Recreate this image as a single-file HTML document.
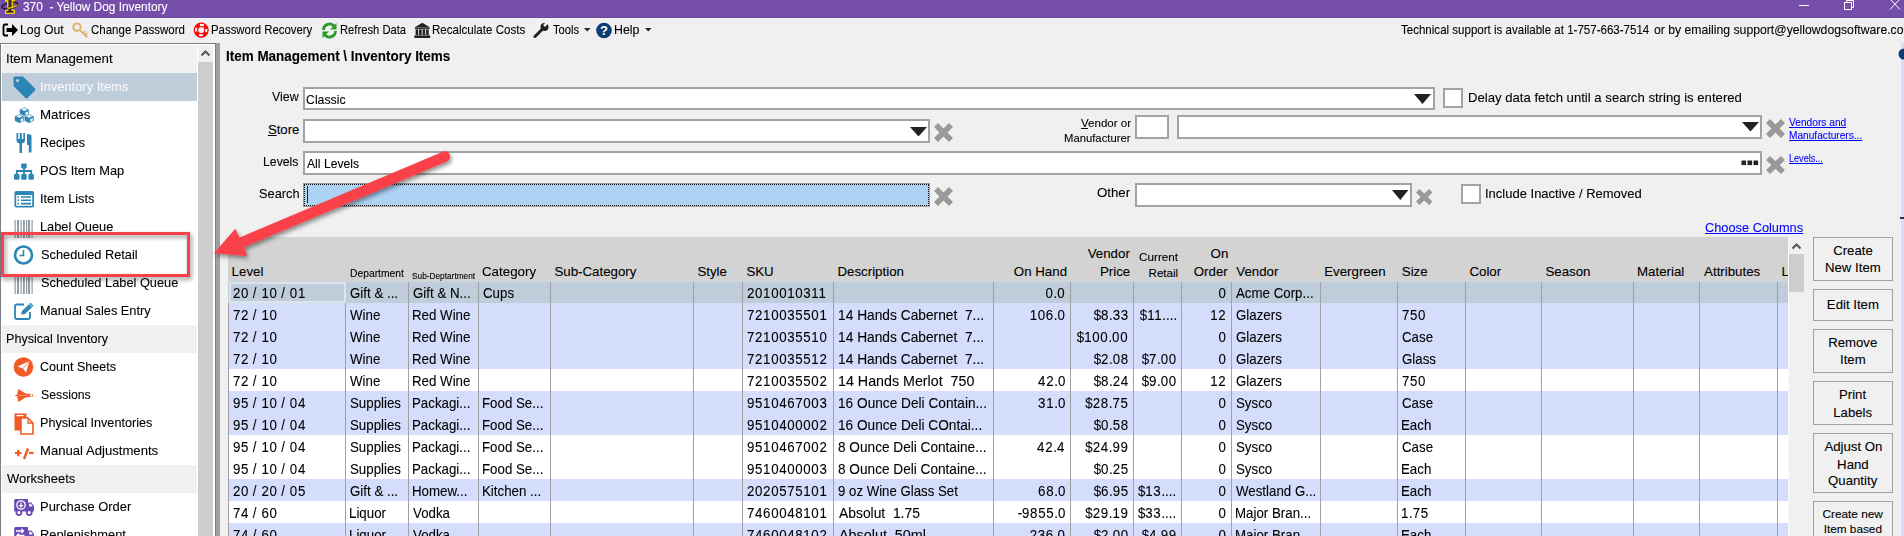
<!DOCTYPE html><html><head><meta charset="utf-8"><title>Yellow Dog Inventory</title><style>
html,body{margin:0;padding:0;}
body{width:1904px;height:536px;overflow:hidden;position:relative;background:#f0f0f0;font-family:"Liberation Sans", sans-serif;color:#000;}
.t{position:absolute;white-space:pre;-webkit-text-stroke:0.1px currentColor;}
.r{position:absolute;}
.d{letter-spacing:0.7px;}
.s{letter-spacing:1.3px;}
.lnk{color:#0000ff;text-decoration:underline;}
</style></head><body>
<div class="r" style="left:0px;top:0px;width:1904px;height:18px;background:#744ea8"></div>
<div class="r" style="left:0px;top:17px;width:1904px;height:1px;background:#6d47a2"></div>
<svg class="r" style="left:0px;top:0px;" width="18" height="17" viewBox="0 0 18 17"><path d="M5 -1 H15 V1.8 H13 V9.8 H15 V14 H5 V9.8 H7 V1.8 H5 Z" fill="#f6cc00"/><path d="M8.4 -1 H11.6 V11 H13.6 V12.8 H6.4 V11 H8.4 Z" fill="#333"/><path d="M12.8 2.3 Q18.5 1.8 17 5 Q15 8 8 8.6 Q1.5 9.3 2.2 6.5 Q3 4.5 7 3.5" fill="none" stroke="#222" stroke-width="1.5"/><path d="M7.5 8.4 Q14 7.8 17 5" fill="none" stroke="#f6cc00" stroke-width="1.1"/></svg>
<div class="t " style="left:22.55px;top:0px;font-size:12px;line-height:14px;transform:scaleX(0.9890);transform-origin:0 0;color:#fff">370  - Yellow Dog Inventory</div>
<div class="r" style="left:1799px;top:5px;width:10px;height:1px;background:#fff"></div>
<svg class="r" style="left:1843px;top:0px;" width="12" height="11" viewBox="0 0 12 11"><rect x="1.5" y="2.5" width="7" height="7" fill="none" stroke="#fff"/><path d="M3.5 2.5 V0.5 H10.5 V7.5 H8.5" fill="none" stroke="#fff"/></svg>
<svg class="r" style="left:1889px;top:0px;" width="12" height="11" viewBox="0 0 12 11"><path d="M1 -1 L11 9.5 M11 -1 L1 9.5" stroke="#fff" stroke-width="1"/></svg>
<svg class="r" style="left:2px;top:23px;" width="17" height="14" viewBox="0 0 17 14"><path d="M6 1.5 H3.2 Q1.5 1.5 1.5 3.2 V10.8 Q1.5 12.5 3.2 12.5 H6" fill="none" stroke="#000" stroke-width="1.8"/><path d="M4.5 5 H10 V1 L16 7 L10 13 V9 H4.5 Z" fill="#000"/></svg>
<div class="t " style="left:20.49px;top:23px;font-size:12.6px;line-height:14px;transform:scaleX(0.9749);transform-origin:0 0;">Log Out</div>
<svg class="r" style="left:72px;top:22px;" width="17" height="17" viewBox="0 0 17 17"><circle cx="5" cy="5.2" r="3.7" fill="none" stroke="#dcb575" stroke-width="2.1"/><path d="M7.6 7.8 L15.2 15.4" stroke="#dcb575" stroke-width="2" fill="none"/><path d="M11.2 11.4 L13.6 9 M13.2 13.4 L15.4 11.2" stroke="#dcb575" stroke-width="1.7" fill="none"/></svg>
<div class="t " style="left:91.02px;top:23px;font-size:12.6px;line-height:14px;transform:scaleX(0.9130);transform-origin:0 0;">Change Password</div>
<svg class="r" style="left:193px;top:22px;" width="17" height="17" viewBox="0 0 17 17"><circle cx="8.2" cy="8.1" r="6.9" fill="#fff" stroke="#f00" stroke-width="1.3"/><circle cx="8.2" cy="8.1" r="3.6" fill="#f0f0f0" stroke="#f00" stroke-width="1.2"/><circle cx="8.2" cy="8.1" r="5.25" fill="none" stroke="#f00" stroke-width="2.5" stroke-dasharray="4.2 4.05" stroke-dashoffset="-2.05"/></svg>
<div class="t " style="left:211.37px;top:23px;font-size:12.6px;line-height:14px;transform:scaleX(0.9047);transform-origin:0 0;">Password Recovery</div>
<svg class="r" style="left:321px;top:22px;" width="17" height="17" viewBox="0 0 17 17"><path d="M2.5 8 A6 6 0 0 1 13 4" fill="none" stroke="#2a9b2a" stroke-width="2.8"/><path d="M15.5 1 V7.5 H9 Z" fill="#2a9b2a"/><path d="M14.5 9 A6 6 0 0 1 4 13" fill="none" stroke="#2a9b2a" stroke-width="2.8"/><path d="M1.5 16 V9.5 H8 Z" fill="#2a9b2a"/></svg>
<div class="t " style="left:339.68px;top:23px;font-size:12.6px;line-height:14px;transform:scaleX(0.8906);transform-origin:0 0;">Refresh Data</div>
<svg class="r" style="left:414px;top:22px;" width="17" height="17" viewBox="0 0 17 17"><path d="M8.3 0.8 L16.2 5.4 H0.4 Z" fill="#222"/><rect x="1" y="5.6" width="14.6" height="1.3" fill="#222"/><rect x="1.6" y="7.3" width="2.6" height="5.8" fill="#222"/><rect x="5.1" y="7.3" width="2.6" height="5.8" fill="#222"/><rect x="8.6" y="7.3" width="2.6" height="5.8" fill="#222"/><rect x="12.1" y="7.3" width="2.6" height="5.8" fill="#222"/><rect x="0.4" y="13.4" width="15.8" height="2.6" fill="#222"/></svg>
<div class="t " style="left:432.05px;top:23px;font-size:12.6px;line-height:14px;transform:scaleX(0.9184);transform-origin:0 0;">Recalculate Costs</div>
<svg class="r" style="left:533px;top:22px;" width="17" height="16" viewBox="0 0 17 16"><path d="M2 14.5 L9.5 7" stroke="#222" stroke-width="3" stroke-linecap="round"/><circle cx="11.5" cy="5" r="4" fill="#222"/><path d="M11 4 L15.5 -0.5" stroke="#f0f0f0" stroke-width="2.5"/></svg>
<div class="t " style="left:552.95px;top:23px;font-size:12.6px;line-height:14px;transform:scaleX(0.8892);transform-origin:0 0;">Tools</div>
<svg class="r" style="left:584px;top:28px;" width="7" height="4" viewBox="0 0 7 4"><path d="M0 0 H6.5 L3.25 3.5 Z" fill="#222"/></svg>
<svg class="r" style="left:596px;top:22px;" width="17" height="17" viewBox="0 0 17 17"><circle cx="8" cy="8.5" r="7.8" fill="#0d3b73"/><text x="8" y="13.2" text-anchor="middle" font-family="Liberation Sans" font-weight="bold" font-size="13" fill="#fff">?</text></svg>
<div class="t " style="left:614.29px;top:23px;font-size:12.6px;line-height:14px;transform:scaleX(0.9818);transform-origin:0 0;">Help</div>
<svg class="r" style="left:645px;top:28px;" width="7" height="4" viewBox="0 0 7 4"><path d="M0 0 H6.5 L3.25 3.5 Z" fill="#222"/></svg>
<div class="t " style="left:1401.45px;top:23px;font-size:12.6px;line-height:14px;transform:scaleX(0.9163);transform-origin:0 0;">Technical support is available at 1-757-663-7514</div>
<div class="t " style="left:1654.19px;top:23px;font-size:12.6px;line-height:14px;transform:scaleX(0.9705);transform-origin:0 0;">or by emailing support@yellowdogsoftware.com</div>
<div class="r" style="left:0px;top:43px;width:216px;height:493px;background:#7a7f88"></div>
<div class="r" style="left:1px;top:44px;width:214px;height:492px;background:#ffffff"></div>
<div class="r" style="left:216px;top:43px;width:4px;height:493px;background:#a0a0a0"></div>
<div class="r" style="left:198px;top:45px;width:15px;height:491px;background:#f0f0f0"></div>
<div class="r" style="left:198px;top:62px;width:15px;height:474px;background:#cdcdcd"></div>
<svg class="r" style="left:200px;top:49px;" width="11" height="8" viewBox="0 0 11 8"><path d="M1.5 6.5 L5.5 2.5 L9.5 6.5" fill="none" stroke="#555" stroke-width="2"/></svg>
<div class="r" style="left:2px;top:45px;width:195px;height:28px;background:#f0f0f0"></div>
<div class="t " style="left:5.68px;top:51px;font-size:13.2px;line-height:15px;transform:scaleX(1.0031);transform-origin:0 0;">Item Management</div>
<div class="r" style="left:2px;top:73px;width:195px;height:28px;background:#bfcddb"></div>
<svg class="r" style="left:12px;top:75px;" width="25" height="24" viewBox="0 0 25 24"><path d="M3 1.5 H11 L23 13.5 Q24 14.5 23 15.5 L15.5 23 Q14.5 24 13.5 23 L1.5 11 V3 Q1.5 1.5 3 1.5 Z" fill="#2b86b5"/><circle cx="5.5" cy="5.5" r="1.6" fill="#bfcddb"/></svg>
<div class="t " style="left:39.91px;top:79px;font-size:13.2px;line-height:15px;transform:scaleX(0.9792);transform-origin:0 0;color:#f7f9fb">Inventory Items</div>
<svg class="r" style="left:12px;top:104px;" width="24" height="22" viewBox="0 0 24 22"><path d="M12.3 3.0999999999999996 L17.200000000000003 5.5 V10.1 L12.3 12.5 L7.4 10.1 V5.5 Z" fill="#2b86b5" stroke="#fff" stroke-width="0.6"/><path d="M9.100000000000001 5.5 L12.3 4.1 L15.5 5.5 L12.3 6.8999999999999995 Z" fill="#fff"/><path d="M13.5 8.4 L15.9 7.2 V9.8 L13.5 11.0 Z" fill="#fff"/><path d="M7.4 9.899999999999999 L12.3 12.3 V16.9 L7.4 19.3 L2.5 16.9 V12.3 Z" fill="#2b86b5" stroke="#fff" stroke-width="0.6"/><path d="M4.2 12.3 L7.4 10.899999999999999 L10.600000000000001 12.3 L7.4 13.7 Z" fill="#fff"/><path d="M8.6 15.2 L11.0 14.0 V16.6 L8.6 17.8 Z" fill="#fff"/><path d="M17.1 9.899999999999999 L22.0 12.3 V16.9 L17.1 19.3 L12.200000000000001 16.9 V12.3 Z" fill="#2b86b5" stroke="#fff" stroke-width="0.6"/><path d="M13.900000000000002 12.3 L17.1 10.899999999999999 L20.3 12.3 L17.1 13.7 Z" fill="#fff"/><path d="M18.3 15.2 L20.700000000000003 14.0 V16.6 L18.3 17.8 Z" fill="#fff"/></svg>
<div class="t " style="left:40.01px;top:107px;font-size:13.2px;line-height:15px;transform:scaleX(1.0101);transform-origin:0 0;">Matrices</div>
<svg class="r" style="left:15px;top:133px;" width="18" height="21" viewBox="0 0 18 21"><path d="M1.5 0 V7 Q1.5 10 4.5 10.5 V20 H7 V10.5 Q10 10 10 7 V0 H8.3 V6 H6.8 V0 H4.7 V6 H3.2 V0 Z" fill="#2b86b5"/><path d="M12 1 Q16.5 1 16.5 3 V19.5 H13.8 V12 H12 Z" fill="#2b86b5"/></svg>
<div class="t " style="left:40.08px;top:135px;font-size:13.2px;line-height:15px;transform:scaleX(0.9453);transform-origin:0 0;">Recipes</div>
<svg class="r" style="left:13px;top:163px;" width="22" height="18" viewBox="0 0 22 18"><rect x="8.2" y="0.5" width="5.5" height="5" rx="1" fill="#2b86b5"/><path d="M11 5 V8 M3.8 11 V8 H18.2 V11 M11 8 V11" stroke="#2b86b5" stroke-width="1.8" fill="none"/><rect x="1" y="11" width="5.5" height="5.8" rx="1" fill="#2b86b5"/><rect x="8.2" y="11" width="5.5" height="5.8" rx="1" fill="#2b86b5"/><rect x="15.4" y="11" width="5.5" height="5.8" rx="1" fill="#2b86b5"/></svg>
<div class="t " style="left:40.05px;top:163px;font-size:13.2px;line-height:15px;transform:scaleX(0.9738);transform-origin:0 0;">POS Item Map</div>
<svg class="r" style="left:13px;top:190px;" width="22" height="19" viewBox="0 0 22 19"><rect x="1.5" y="1" width="19.5" height="16.5" rx="1.8" fill="#2b86b5"/><rect x="3.2" y="5" width="16" height="10.8" fill="#fff"/><path d="M4.5 7 H6 M8 7 H18 M4.5 10.3 H6 M8 10.3 H18 M4.5 13.6 H6 M8 13.6 H18" stroke="#2b86b5" stroke-width="1.6"/></svg>
<div class="t " style="left:39.93px;top:191px;font-size:13.2px;line-height:15px;transform:scaleX(0.9620);transform-origin:0 0;">Item Lists</div>
<svg class="r" style="left:13px;top:220px;opacity:0.85" width="22" height="18" viewBox="0 0 22 18"><rect x="1.5" y="0" width="1.2" height="18" fill="#7d8a94"/><rect x="4" y="0" width="2" height="18" fill="#7d8a94"/><rect x="7.5" y="0" width="1.2" height="18" fill="#7d8a94"/><rect x="10" y="0" width="1.8" height="18" fill="#7d8a94"/><rect x="13" y="0" width="1.2" height="18" fill="#7d8a94"/><rect x="15" y="0" width="2" height="18" fill="#7d8a94"/><rect x="18.5" y="0" width="1.2" height="18" fill="#7d8a94"/></svg>
<div class="t " style="left:40.05px;top:219px;font-size:13.2px;line-height:15px;transform:scaleX(0.9713);transform-origin:0 0;">Label Queue</div>
<svg class="r" style="left:13px;top:244px;" width="22" height="22" viewBox="0 0 22 22"><circle cx="10.5" cy="11" r="8.5" fill="none" stroke="#2b86b5" stroke-width="2.6"/><path d="M10.5 6 V11.5 H6.5" fill="none" stroke="#2b86b5" stroke-width="1.6"/></svg>
<div class="t " style="left:40.51px;top:247px;font-size:13.2px;line-height:15px;transform:scaleX(0.9693);transform-origin:0 0;">Scheduled Retail</div>
<svg class="r" style="left:13px;top:276px;opacity:0.85" width="22" height="18" viewBox="0 0 22 18"><rect x="1.5" y="0" width="1.2" height="18" fill="#7d8a94"/><rect x="4" y="0" width="2" height="18" fill="#7d8a94"/><rect x="7.5" y="0" width="1.2" height="18" fill="#7d8a94"/><rect x="10" y="0" width="1.8" height="18" fill="#7d8a94"/><rect x="13" y="0" width="1.2" height="18" fill="#7d8a94"/><rect x="15" y="0" width="2" height="18" fill="#7d8a94"/><rect x="18.5" y="0" width="1.2" height="18" fill="#7d8a94"/></svg>
<div class="t " style="left:40.51px;top:275px;font-size:13.2px;line-height:15px;transform:scaleX(0.9705);transform-origin:0 0;">Scheduled Label Queue</div>
<svg class="r" style="left:13px;top:302px;" width="22" height="19" viewBox="0 0 22 19"><path d="M11 2.5 H4 Q2 2.5 2 4.5 V15 Q2 17 4 17 H15 Q17 17 17 15 V10" fill="none" stroke="#2b86b5" stroke-width="1.8"/><path d="M8 12.5 L9 9 L17.5 0.8 L20.5 3.8 L12 12 Z" fill="#2b86b5"/><path d="M16.5 2 L19.3 4.8" stroke="#fff" stroke-width="0.8"/></svg>
<div class="t " style="left:40.05px;top:303px;font-size:13.2px;line-height:15px;transform:scaleX(0.9670);transform-origin:0 0;">Manual Sales Entry</div>
<div class="r" style="left:2px;top:325px;width:195px;height:28px;background:#f0f0f0"></div>
<div class="t " style="left:6.07px;top:331px;font-size:13.2px;line-height:15px;transform:scaleX(0.9538);transform-origin:0 0;">Physical Inventory</div>
<svg class="r" style="left:13px;top:356px;" width="22" height="22" viewBox="0 0 22 22"><circle cx="10.5" cy="11" r="9.8" fill="#f15a24"/><path d="M4.5 10.5 L16.5 5 L13 16.5 L10 12.5 Z" fill="#fff"/><path d="M10 12.5 L16.5 5" stroke="#f15a24" stroke-width="0.8"/></svg>
<div class="t " style="left:40.47px;top:359px;font-size:13.2px;line-height:15px;transform:scaleX(0.9498);transform-origin:0 0;">Count Sheets</div>
<svg class="r" style="left:13px;top:388px;" width="22" height="15" viewBox="0 0 22 15"><path d="M1.5 7.4 Q6 5.2 12 5.4 L19 6 Q21.2 7.4 19 8.8 L12 9.4 Q6 9.6 1.5 7.4 Z" fill="#f15a24"/><path d="M4 6.2 L5.5 1 L13.5 6 Z M4 8.6 L5.5 14 L13.5 8.8 Z" fill="#f15a24"/><circle cx="18" cy="7.4" r="1.1" fill="#fff"/><path d="M6 7.4 H15" stroke="#fbb" stroke-width="0.6"/></svg>
<div class="t " style="left:40.54px;top:387px;font-size:13.2px;line-height:15px;transform:scaleX(0.9298);transform-origin:0 0;">Sessions</div>
<svg class="r" style="left:13px;top:413px;" width="22" height="22" viewBox="0 0 22 22"><rect x="1.5" y="0.5" width="12" height="17" fill="#f15a24"/><path d="M8 5 H15 L20 10 V21 H8 Z" fill="#fff" stroke="#f15a24" stroke-width="1.6"/><path d="M15 5 V10 H20" fill="none" stroke="#f15a24" stroke-width="1.3"/><rect x="3.5" y="2" width="7" height="1.2" fill="#fff"/></svg>
<div class="t " style="left:40.06px;top:415px;font-size:13.2px;line-height:15px;transform:scaleX(0.9573);transform-origin:0 0;">Physical Inventories</div>
<svg class="r" style="left:13px;top:447px;" width="22" height="14" viewBox="0 0 22 14"><path d="M2 6 H8.5 M5.25 2.8 V9.2" stroke="#f15a24" stroke-width="2.2"/><path d="M11 12 L15 1.5" stroke="#f15a24" stroke-width="2.4"/><path d="M16 6 H20.5" stroke="#f15a24" stroke-width="2.2"/></svg>
<div class="t " style="left:40.02px;top:443px;font-size:13.2px;line-height:15px;transform:scaleX(0.9949);transform-origin:0 0;">Manual Adjustments</div>
<div class="r" style="left:2px;top:465px;width:195px;height:28px;background:#f0f0f0"></div>
<div class="t " style="left:6.95px;top:471px;font-size:13.2px;line-height:15px;transform:scaleX(0.9836);transform-origin:0 0;">Worksheets</div>
<svg class="r" style="left:13px;top:499px;" width="22" height="18" viewBox="0 0 22 18"><path d="M1.2 1.5 Q1.2 0 2.7 0 H15 V12.5 H1.2 Z" fill="#6a4bb5"/><path d="M15 3.5 H18.2 L21 6.8 V12.5 H15 Z" fill="#6a4bb5"/><path d="M16.2 4.8 H17.8 L19.8 7.4 H16.2 Z" fill="#fff"/><circle cx="5.9" cy="13.6" r="2.5" fill="#fff" stroke="#6a4bb5" stroke-width="1.8"/><circle cx="16.2" cy="13.6" r="2.5" fill="#fff" stroke="#6a4bb5" stroke-width="1.8"/><circle cx="8" cy="6" r="4.2" fill="none" stroke="#fff" stroke-width="1.3"/><path d="M8 3.5 V7.8 M6.2 6.2 L8 8 L9.8 6.2" stroke="#fff" stroke-width="1.2" fill="none"/></svg>
<div class="t " style="left:39.94px;top:499px;font-size:13.2px;line-height:15px;transform:scaleX(0.9807);transform-origin:0 0;">Purchase Order</div>
<svg class="r" style="left:13px;top:527px;" width="22" height="18" viewBox="0 0 22 18"><path d="M1.2 1.5 Q1.2 0 2.7 0 H15 V12.5 H1.2 Z" fill="#6a4bb5"/><path d="M15 3.5 H18.2 L21 6.8 V12.5 H15 Z" fill="#6a4bb5"/><path d="M16.2 4.8 H17.8 L19.8 7.4 H16.2 Z" fill="#fff"/><path d="M3 4 H10.5 M8.5 2 L10.5 4 L8.5 6 M11.5 8.5 H4 M6 6.5 L4 8.5 L6 10.5" stroke="#fff" stroke-width="1.4" fill="none"/></svg>
<div class="t " style="left:39.94px;top:527px;font-size:13.2px;line-height:15px;transform:scaleX(0.9763);transform-origin:0 0;">Replenishment</div>
<div class="t " style="left:225.71px;top:49px;font-size:13.8px;line-height:15px;font-weight:bold;transform:scaleX(0.9751);transform-origin:0 0;">Item Management \ Inventory Items</div>
<div class="t " style="left:272.25px;top:89px;font-size:13.2px;line-height:15px;transform:scaleX(0.9417);transform-origin:0 0;">View</div>
<div class="r" style="left:303px;top:87px;width:1132px;height:23px;background:#fff;border:2px solid #a3a3a3;box-sizing:border-box"></div>
<div class="t " style="left:306.48px;top:92px;font-size:13.2px;line-height:15px;transform:scaleX(0.9319);transform-origin:0 0;">Classic</div>
<svg class="r" style="left:1414px;top:94px;" width="17" height="10" viewBox="0 0 17 10"><path d="M0 0 H17 L8.5 10 Z" fill="#222"/></svg>
<div class="r" style="left:1443px;top:88px;width:20px;height:20px;background:#fff;border:2px solid #a3a3a3;box-sizing:border-box"></div>
<div class="t " style="left:1467.52px;top:90px;font-size:13.2px;line-height:15px;transform:scaleX(0.9963);transform-origin:0 0;">Delay data fetch until a search string is entered</div>
<div class="t " style="left:267.89px;top:122px;font-size:13.2px;line-height:15px;transform-origin:0 0;"><u>S</u>tore</div>
<div class="r" style="left:303px;top:119px;width:627px;height:24px;background:#fff;border:2px solid #a3a3a3;box-sizing:border-box"></div>
<svg class="r" style="left:909.5px;top:126.5px;" width="17.0" height="9.5" viewBox="0 0 17.0 9.5"><path d="M0 0 H17.0 L8.5 9.5 Z" fill="#222"/></svg>
<svg class="r" style="left:934px;top:123px;" width="19" height="19" viewBox="0 0 19 19"><g stroke="#999"><path d="M2.016 2.016 L16.984 16.984 M16.984 2.016 L2.016 16.984" stroke-width="5.6" stroke-linecap="butt"/><path d="M4.199999999999999 4.199999999999999 L14.8 14.8 M14.8 4.199999999999999 L4.199999999999999 14.8" stroke-width="5.04" stroke-linecap="round"/></g></svg>
<div class="t " style="left:1080.95px;top:117px;font-size:11.6px;line-height:12px;transform:scaleX(0.9947);transform-origin:0 0;"><u>V</u>endor or</div>
<div class="t " style="left:1064.47px;top:132px;font-size:11.6px;line-height:12px;transform:scaleX(0.9734);transform-origin:0 0;">Manufacturer</div>
<div class="r" style="left:1135px;top:115px;width:34px;height:24px;background:#fff;border:2px solid #a3a3a3;box-sizing:border-box"></div>
<div class="r" style="left:1177px;top:115px;width:585px;height:24px;background:#fff;border:2px solid #a3a3a3;box-sizing:border-box"></div>
<svg class="r" style="left:1741.5px;top:122px;" width="17.0" height="9.5" viewBox="0 0 17.0 9.5"><path d="M0 0 H17.0 L8.5 9.5 Z" fill="#222"/></svg>
<svg class="r" style="left:1766px;top:119px;" width="19" height="19" viewBox="0 0 19 19"><g stroke="#999"><path d="M2.016 2.016 L16.984 16.984 M16.984 2.016 L2.016 16.984" stroke-width="5.6" stroke-linecap="butt"/><path d="M4.199999999999999 4.199999999999999 L14.8 14.8 M14.8 4.199999999999999 L4.199999999999999 14.8" stroke-width="5.04" stroke-linecap="round"/></g></svg>
<div class="t lnk" style="left:1789.36px;top:117px;font-size:10.3px;line-height:11px;transform:scaleX(0.9905);transform-origin:0 0;">Vendors and</div>
<div class="t lnk" style="left:1788.57px;top:130px;font-size:10.3px;line-height:11px;transform:scaleX(0.9844);transform-origin:0 0;">Manufacturers...</div>
<div class="t " style="left:263.49px;top:154px;font-size:13.2px;line-height:15px;transform:scaleX(0.9292);transform-origin:0 0;">Levels</div>
<div class="r" style="left:303px;top:151px;width:1459px;height:24px;background:#fff;border:2px solid #a3a3a3;box-sizing:border-box"></div>
<div class="t " style="left:307.08px;top:156px;font-size:13.2px;line-height:15px;transform:scaleX(0.9233);transform-origin:0 0;">All Levels</div>
<svg class="r" style="left:1741px;top:160px;" width="18" height="6" viewBox="0 0 18 6"><rect x="0.5" y="0.5" width="4.6" height="4.6" fill="#222"/><rect x="6.5" y="0.5" width="4.6" height="4.6" fill="#222"/><rect x="12.5" y="0.5" width="4.6" height="4.6" fill="#222"/></svg>
<svg class="r" style="left:1766px;top:156px;" width="19" height="18" viewBox="0 0 19 18"><g stroke="#999"><path d="M2.016 2.016 L16.984 15.984 M16.984 2.016 L2.016 15.984" stroke-width="5.6" stroke-linecap="butt"/><path d="M4.199999999999999 4.199999999999999 L14.8 13.8 M14.8 4.199999999999999 L4.199999999999999 13.8" stroke-width="5.04" stroke-linecap="round"/></g></svg>
<div class="t lnk" style="left:1788.65px;top:153px;font-size:10.3px;line-height:11px;transform:scaleX(0.8834);transform-origin:0 0;">Levels...</div>
<div class="t " style="left:259.01px;top:186px;font-size:13.2px;line-height:15px;transform:scaleX(0.9711);transform-origin:0 0;">Search</div>
<div class="r" style="left:303px;top:183px;width:627px;height:24px;background:#acd3f3;border:1px solid #999;box-sizing:border-box"></div>
<div class="r" style="left:304px;top:184px;width:625px;height:22px;border:1px dotted #111;box-sizing:border-box"></div>
<div class="r" style="left:307px;top:186px;width:1.2px;height:17px;background:#3a2300"></div>
<svg class="r" style="left:934px;top:187px;" width="19" height="19" viewBox="0 0 19 19"><g stroke="#999"><path d="M2.016 2.016 L16.984 16.984 M16.984 2.016 L2.016 16.984" stroke-width="5.6" stroke-linecap="butt"/><path d="M4.199999999999999 4.199999999999999 L14.8 14.8 M14.8 4.199999999999999 L4.199999999999999 14.8" stroke-width="5.04" stroke-linecap="round"/></g></svg>
<div class="t " style="left:1097.36px;top:185px;font-size:13.2px;line-height:15px;transform:scaleX(1.0045);transform-origin:0 0;">Other</div>
<div class="r" style="left:1135px;top:183px;width:277px;height:24px;background:#fff;border:2px solid #a3a3a3;box-sizing:border-box"></div>
<svg class="r" style="left:1391.5px;top:190px;" width="16.5" height="10" viewBox="0 0 16.5 10"><path d="M0 0 H16.5 L8.25 10 Z" fill="#222"/></svg>
<svg class="r" style="left:1416px;top:189px;" width="16.5" height="16" viewBox="0 0 16.5 16"><g stroke="#999"><path d="M1.728 1.728 L14.772 14.272 M14.772 1.728 L1.728 14.272" stroke-width="4.8" stroke-linecap="butt"/><path d="M3.5999999999999996 3.5999999999999996 L12.9 12.4 M12.9 3.5999999999999996 L3.5999999999999996 12.4" stroke-width="4.32" stroke-linecap="round"/></g></svg>
<div class="r" style="left:1461px;top:184px;width:20px;height:20px;background:#fff;border:2px solid #a3a3a3;box-sizing:border-box"></div>
<div class="t " style="left:1484.80px;top:186px;font-size:13.2px;line-height:15px;transform:scaleX(0.9856);transform-origin:0 0;">Include Inactive / Removed</div>
<div class="t lnk" style="left:1704.66px;top:220px;font-size:13.2px;line-height:15px;transform:scaleX(0.9699);transform-origin:0 0;">Choose Columns</div>
<div class="r" style="left:228px;top:237px;width:1560px;height:44px;background:#d3d3d3"></div>
<div class="t " style="left:231.61px;top:264px;font-size:13.3px;line-height:15px;transform-origin:0 0;">Level</div>
<div class="t " style="left:349.56px;top:268px;font-size:10px;line-height:11px;transform:scaleX(1.0304);transform-origin:0 0;">Department</div>
<div class="t " style="left:411.52px;top:271px;font-size:8.6px;line-height:10px;transform:scaleX(0.9644);transform-origin:0 0;">Sub-Deptartment</div>
<div class="t " style="left:482.33px;top:264px;font-size:13.3px;line-height:15px;transform:scaleX(1.0023);transform-origin:0 0;">Category</div>
<div class="t " style="left:554.39px;top:264px;font-size:13.3px;line-height:15px;transform-origin:0 0;">Sub-Category</div>
<div class="t " style="left:697.39px;top:264px;font-size:13.3px;line-height:15px;transform-origin:0 0;">Style</div>
<div class="t " style="left:746.39px;top:264px;font-size:13.3px;line-height:15px;transform-origin:0 0;">SKU</div>
<div class="t " style="left:837.41px;top:264px;font-size:13.3px;line-height:15px;transform-origin:0 0;">Description</div>
<div class="t " style="right:836.94px;top:264px;font-size:13.3px;line-height:15px;transform-origin:100% 0;">On Hand</div>
<div class="t " style="right:774.17px;top:246px;font-size:13.3px;line-height:15px;transform-origin:100% 0;">Vendor</div>
<div class="t " style="right:773.81px;top:264px;font-size:13.3px;line-height:15px;transform-origin:100% 0;">Price</div>
<div class="t " style="left:1138.61px;top:251px;font-size:11.6px;line-height:12px;transform:scaleX(1.0105);transform-origin:0 0;">Current</div>
<div class="t " style="right:725.83px;top:267px;font-size:11.6px;line-height:12px;transform-origin:100% 0;">Retail</div>
<div class="t " style="right:675.65px;top:246px;font-size:13.3px;line-height:15px;transform-origin:100% 0;">On</div>
<div class="t " style="right:676.29px;top:264px;font-size:13.3px;line-height:15px;transform-origin:100% 0;">Order</div>
<div class="t " style="left:1236.25px;top:264px;font-size:13.3px;line-height:15px;transform-origin:0 0;">Vendor</div>
<div class="t " style="left:1324.21px;top:264px;font-size:13.3px;line-height:15px;transform-origin:0 0;">Evergreen</div>
<div class="t " style="left:1401.79px;top:264px;font-size:13.3px;line-height:15px;transform-origin:0 0;">Size</div>
<div class="t " style="left:1469.43px;top:264px;font-size:13.3px;line-height:15px;transform-origin:0 0;">Color</div>
<div class="t " style="left:1545.39px;top:264px;font-size:13.3px;line-height:15px;transform-origin:0 0;">Season</div>
<div class="t " style="left:1637.01px;top:264px;font-size:13.3px;line-height:15px;transform-origin:0 0;">Material</div>
<div class="t " style="left:1704.07px;top:264px;font-size:13.3px;line-height:15px;transform-origin:0 0;">Attributes</div>
<div class="t " style="left:1781.41px;top:264px;font-size:13.3px;line-height:15px;transform-origin:0 0;">L</div>
<div class="r" style="left:228px;top:281px;width:1560px;height:22px;background:#bfcddb"></div>
<div class="r" style="left:228px;top:303px;width:1560px;height:22px;background:#d4ddfb"></div>
<div class="r" style="left:228px;top:325px;width:1560px;height:22px;background:#d4ddfb"></div>
<div class="r" style="left:228px;top:347px;width:1560px;height:22px;background:#d4ddfb"></div>
<div class="r" style="left:228px;top:369px;width:1560px;height:22px;background:#ffffff"></div>
<div class="r" style="left:228px;top:391px;width:1560px;height:22px;background:#d4ddfb"></div>
<div class="r" style="left:228px;top:413px;width:1560px;height:22px;background:#d4ddfb"></div>
<div class="r" style="left:228px;top:435px;width:1560px;height:22px;background:#ffffff"></div>
<div class="r" style="left:228px;top:457px;width:1560px;height:22px;background:#ffffff"></div>
<div class="r" style="left:228px;top:479px;width:1560px;height:22px;background:#d4ddfb"></div>
<div class="r" style="left:228px;top:501px;width:1560px;height:22px;background:#ffffff"></div>
<div class="r" style="left:228px;top:523px;width:1560px;height:22px;background:#d4ddfb"></div>
<div class="r" style="left:228px;top:303px;width:1px;height:233px;background:#a0a0a0"></div>
<div class="r" style="left:345px;top:303px;width:1px;height:233px;background:#a0a0a0"></div>
<div class="r" style="left:408px;top:281px;width:1px;height:255px;background:#a0a0a0"></div>
<div class="r" style="left:478px;top:281px;width:1px;height:255px;background:#a0a0a0"></div>
<div class="r" style="left:550px;top:281px;width:1px;height:255px;background:#a0a0a0"></div>
<div class="r" style="left:693px;top:281px;width:1px;height:255px;background:#a0a0a0"></div>
<div class="r" style="left:742px;top:281px;width:1px;height:255px;background:#a0a0a0"></div>
<div class="r" style="left:833px;top:281px;width:1px;height:255px;background:#a0a0a0"></div>
<div class="r" style="left:993px;top:281px;width:1px;height:255px;background:#a0a0a0"></div>
<div class="r" style="left:1070px;top:281px;width:1px;height:255px;background:#a0a0a0"></div>
<div class="r" style="left:1133px;top:281px;width:1px;height:255px;background:#a0a0a0"></div>
<div class="r" style="left:1181px;top:281px;width:1px;height:255px;background:#a0a0a0"></div>
<div class="r" style="left:1231px;top:281px;width:1px;height:255px;background:#a0a0a0"></div>
<div class="r" style="left:1320px;top:281px;width:1px;height:255px;background:#a0a0a0"></div>
<div class="r" style="left:1397px;top:281px;width:1px;height:255px;background:#a0a0a0"></div>
<div class="r" style="left:1465px;top:281px;width:1px;height:255px;background:#a0a0a0"></div>
<div class="r" style="left:1541px;top:281px;width:1px;height:255px;background:#a0a0a0"></div>
<div class="r" style="left:1633px;top:281px;width:1px;height:255px;background:#a0a0a0"></div>
<div class="r" style="left:1699px;top:281px;width:1px;height:255px;background:#a0a0a0"></div>
<div class="r" style="left:1777px;top:281px;width:1px;height:255px;background:#a0a0a0"></div>
<div class="r" style="left:228px;top:281px;width:1560px;height:1px;background:#cbd6e0"></div>
<div class="r" style="left:229px;top:282px;width:117px;height:21px;border:1px solid #d9e1e9;box-sizing:border-box"></div>
<div class="r" style="left:230px;top:283px;width:115px;height:19px;border:1px solid #dde4eb;box-sizing:border-box"></div>
<div class="t " style="left:232.64px;top:285px;font-size:14.3px;line-height:16px;transform:scaleX(0.9300);transform-origin:0 0;"><span class="d">20</span> <span class="s">/</span> <span class="d">10</span> <span class="s">/</span> <span class="d">01</span></div>
<div class="t " style="left:349.64px;top:285px;font-size:14.3px;line-height:16px;transform:scaleX(0.9300);transform-origin:0 0;">Gift &amp; ...</div>
<div class="t " style="left:412.64px;top:285px;font-size:14.3px;line-height:16px;transform:scaleX(0.9300);transform-origin:0 0;">Gift &amp; N...</div>
<div class="t " style="left:482.64px;top:285px;font-size:14.3px;line-height:16px;transform:scaleX(0.9300);transform-origin:0 0;">Cups</div>
<div class="t " style="left:746.64px;top:285px;font-size:14.3px;line-height:16px;transform:scaleX(0.9300);transform-origin:0 0;"><span class="d">2010010311</span></div>
<div class="t " style="right:838.44px;top:285px;font-size:14.3px;line-height:16px;transform:scaleX(0.9300);transform-origin:100% 0;"><span class="d">0</span>.<span class="d">0</span></div>
<div class="t " style="right:677.44px;top:285px;font-size:14.3px;line-height:16px;transform:scaleX(0.9300);transform-origin:100% 0;"><span class="d">0</span></div>
<div class="t " style="left:1236.27px;top:285px;font-size:14.3px;line-height:16px;transform:scaleX(0.9300);transform-origin:0 0;">Acme Corp...</div>
<div class="t " style="left:232.61px;top:307px;font-size:14.3px;line-height:16px;transform:scaleX(0.9300);transform-origin:0 0;"><span class="d">72</span> <span class="s">/</span> <span class="d">10</span></div>
<div class="t " style="left:350.25px;top:307px;font-size:14.3px;line-height:16px;transform:scaleX(0.9300);transform-origin:0 0;">Wine</div>
<div class="t " style="left:412.21px;top:307px;font-size:14.3px;line-height:16px;transform:scaleX(0.9300);transform-origin:0 0;">Red Wine</div>
<div class="t " style="left:746.61px;top:307px;font-size:14.3px;line-height:16px;transform:scaleX(0.9300);transform-origin:0 0;"><span class="d">7210035501</span></div>
<div class="t " style="left:837.75px;top:307px;font-size:14.3px;line-height:16px;transform:scaleX(0.9623);transform-origin:0 0;">14 Hands Cabernet  7...</div>
<div class="t " style="right:838.44px;top:307px;font-size:14.3px;line-height:16px;transform:scaleX(0.9300);transform-origin:100% 0;"><span class="d">106</span>.<span class="d">0</span></div>
<div class="t " style="right:775.36px;top:307px;font-size:14.3px;line-height:16px;transform:scaleX(0.9300);transform-origin:100% 0;">$<span class="d">8</span>.<span class="d">33</span></div>
<div class="t " style="right:727.38px;top:307px;font-size:14.3px;line-height:16px;transform:scaleX(0.9300);transform-origin:100% 0;">$<span class="d">11</span>....</div>
<div class="t " style="right:677.28px;top:307px;font-size:14.3px;line-height:16px;transform:scaleX(0.9300);transform-origin:100% 0;"><span class="d">12</span></div>
<div class="t " style="left:1235.64px;top:307px;font-size:14.3px;line-height:16px;transform:scaleX(0.9300);transform-origin:0 0;">Glazers</div>
<div class="t " style="left:1401.61px;top:307px;font-size:14.3px;line-height:16px;transform:scaleX(0.9300);transform-origin:0 0;"><span class="d">750</span></div>
<div class="t " style="left:232.61px;top:329px;font-size:14.3px;line-height:16px;transform:scaleX(0.9300);transform-origin:0 0;"><span class="d">72</span> <span class="s">/</span> <span class="d">10</span></div>
<div class="t " style="left:350.25px;top:329px;font-size:14.3px;line-height:16px;transform:scaleX(0.9300);transform-origin:0 0;">Wine</div>
<div class="t " style="left:412.21px;top:329px;font-size:14.3px;line-height:16px;transform:scaleX(0.9300);transform-origin:0 0;">Red Wine</div>
<div class="t " style="left:746.61px;top:329px;font-size:14.3px;line-height:16px;transform:scaleX(0.9300);transform-origin:0 0;"><span class="d">7210035510</span></div>
<div class="t " style="left:837.75px;top:329px;font-size:14.3px;line-height:16px;transform:scaleX(0.9623);transform-origin:0 0;">14 Hands Cabernet  7...</div>
<div class="t " style="right:775.43px;top:329px;font-size:14.3px;line-height:16px;transform:scaleX(0.9300);transform-origin:100% 0;">$<span class="d">100</span>.<span class="d">00</span></div>
<div class="t " style="right:677.44px;top:329px;font-size:14.3px;line-height:16px;transform:scaleX(0.9300);transform-origin:100% 0;"><span class="d">0</span></div>
<div class="t " style="left:1235.64px;top:329px;font-size:14.3px;line-height:16px;transform:scaleX(0.9300);transform-origin:0 0;">Glazers</div>
<div class="t " style="left:1401.64px;top:329px;font-size:14.3px;line-height:16px;transform:scaleX(0.9300);transform-origin:0 0;">Case</div>
<div class="t " style="left:232.61px;top:351px;font-size:14.3px;line-height:16px;transform:scaleX(0.9300);transform-origin:0 0;"><span class="d">72</span> <span class="s">/</span> <span class="d">10</span></div>
<div class="t " style="left:350.25px;top:351px;font-size:14.3px;line-height:16px;transform:scaleX(0.9300);transform-origin:0 0;">Wine</div>
<div class="t " style="left:412.21px;top:351px;font-size:14.3px;line-height:16px;transform:scaleX(0.9300);transform-origin:0 0;">Red Wine</div>
<div class="t " style="left:746.61px;top:351px;font-size:14.3px;line-height:16px;transform:scaleX(0.9300);transform-origin:0 0;"><span class="d">7210035512</span></div>
<div class="t " style="left:837.75px;top:351px;font-size:14.3px;line-height:16px;transform:scaleX(0.9623);transform-origin:0 0;">14 Hands Cabernet  7...</div>
<div class="t " style="right:775.36px;top:351px;font-size:14.3px;line-height:16px;transform:scaleX(0.9300);transform-origin:100% 0;">$<span class="d">2</span>.<span class="d">08</span></div>
<div class="t " style="right:727.44px;top:351px;font-size:14.3px;line-height:16px;transform:scaleX(0.9300);transform-origin:100% 0;">$<span class="d">7</span>.<span class="d">00</span></div>
<div class="t " style="right:677.44px;top:351px;font-size:14.3px;line-height:16px;transform:scaleX(0.9300);transform-origin:100% 0;"><span class="d">0</span></div>
<div class="t " style="left:1235.64px;top:351px;font-size:14.3px;line-height:16px;transform:scaleX(0.9300);transform-origin:0 0;">Glazers</div>
<div class="t " style="left:1401.64px;top:351px;font-size:14.3px;line-height:16px;transform:scaleX(0.9300);transform-origin:0 0;">Glass</div>
<div class="t " style="left:232.61px;top:373px;font-size:14.3px;line-height:16px;transform:scaleX(0.9300);transform-origin:0 0;"><span class="d">72</span> <span class="s">/</span> <span class="d">10</span></div>
<div class="t " style="left:350.25px;top:373px;font-size:14.3px;line-height:16px;transform:scaleX(0.9300);transform-origin:0 0;">Wine</div>
<div class="t " style="left:412.21px;top:373px;font-size:14.3px;line-height:16px;transform:scaleX(0.9300);transform-origin:0 0;">Red Wine</div>
<div class="t " style="left:746.61px;top:373px;font-size:14.3px;line-height:16px;transform:scaleX(0.9300);transform-origin:0 0;"><span class="d">7210035502</span></div>
<div class="t " style="left:837.72px;top:373px;font-size:14.3px;line-height:16px;transform:scaleX(0.9979);transform-origin:0 0;">14 Hands Merlot  750</div>
<div class="t " style="right:838.44px;top:373px;font-size:14.3px;line-height:16px;transform:scaleX(0.9300);transform-origin:100% 0;"><span class="d">42</span>.<span class="d">0</span></div>
<div class="t " style="right:775.57px;top:373px;font-size:14.3px;line-height:16px;transform:scaleX(0.9300);transform-origin:100% 0;">$<span class="d">8</span>.<span class="d">24</span></div>
<div class="t " style="right:727.44px;top:373px;font-size:14.3px;line-height:16px;transform:scaleX(0.9300);transform-origin:100% 0;">$<span class="d">9</span>.<span class="d">00</span></div>
<div class="t " style="right:677.28px;top:373px;font-size:14.3px;line-height:16px;transform:scaleX(0.9300);transform-origin:100% 0;"><span class="d">12</span></div>
<div class="t " style="left:1235.64px;top:373px;font-size:14.3px;line-height:16px;transform:scaleX(0.9300);transform-origin:0 0;">Glazers</div>
<div class="t " style="left:1401.61px;top:373px;font-size:14.3px;line-height:16px;transform:scaleX(0.9300);transform-origin:0 0;"><span class="d">750</span></div>
<div class="t " style="left:232.69px;top:395px;font-size:14.3px;line-height:16px;transform:scaleX(0.9300);transform-origin:0 0;"><span class="d">95</span> <span class="s">/</span> <span class="d">10</span> <span class="s">/</span> <span class="d">04</span></div>
<div class="t " style="left:349.69px;top:395px;font-size:14.3px;line-height:16px;transform:scaleX(0.9300);transform-origin:0 0;">Supplies</div>
<div class="t " style="left:412.21px;top:395px;font-size:14.3px;line-height:16px;transform:scaleX(0.9300);transform-origin:0 0;">Packagi...</div>
<div class="t " style="left:482.21px;top:395px;font-size:14.3px;line-height:16px;transform:scaleX(0.9300);transform-origin:0 0;">Food Se...</div>
<div class="t " style="left:746.69px;top:395px;font-size:14.3px;line-height:16px;transform:scaleX(0.9300);transform-origin:0 0;"><span class="d">9510467003</span></div>
<div class="t " style="left:837.76px;top:395px;font-size:14.3px;line-height:16px;transform:scaleX(0.9563);transform-origin:0 0;">16 Ounce Deli Contain...</div>
<div class="t " style="right:838.44px;top:395px;font-size:14.3px;line-height:16px;transform:scaleX(0.9300);transform-origin:100% 0;"><span class="d">31</span>.<span class="d">0</span></div>
<div class="t " style="right:775.38px;top:395px;font-size:14.3px;line-height:16px;transform:scaleX(0.9300);transform-origin:100% 0;">$<span class="d">28</span>.<span class="d">75</span></div>
<div class="t " style="right:677.44px;top:395px;font-size:14.3px;line-height:16px;transform:scaleX(0.9300);transform-origin:100% 0;"><span class="d">0</span></div>
<div class="t " style="left:1235.69px;top:395px;font-size:14.3px;line-height:16px;transform:scaleX(0.9300);transform-origin:0 0;">Sysco</div>
<div class="t " style="left:1401.64px;top:395px;font-size:14.3px;line-height:16px;transform:scaleX(0.9300);transform-origin:0 0;">Case</div>
<div class="t " style="left:232.69px;top:417px;font-size:14.3px;line-height:16px;transform:scaleX(0.9300);transform-origin:0 0;"><span class="d">95</span> <span class="s">/</span> <span class="d">10</span> <span class="s">/</span> <span class="d">04</span></div>
<div class="t " style="left:349.69px;top:417px;font-size:14.3px;line-height:16px;transform:scaleX(0.9300);transform-origin:0 0;">Supplies</div>
<div class="t " style="left:412.21px;top:417px;font-size:14.3px;line-height:16px;transform:scaleX(0.9300);transform-origin:0 0;">Packagi...</div>
<div class="t " style="left:482.21px;top:417px;font-size:14.3px;line-height:16px;transform:scaleX(0.9300);transform-origin:0 0;">Food Se...</div>
<div class="t " style="left:746.69px;top:417px;font-size:14.3px;line-height:16px;transform:scaleX(0.9300);transform-origin:0 0;"><span class="d">9510400002</span></div>
<div class="t " style="left:837.76px;top:417px;font-size:14.3px;line-height:16px;transform:scaleX(0.9549);transform-origin:0 0;">16 Ounce Deli COntai...</div>
<div class="t " style="right:775.36px;top:417px;font-size:14.3px;line-height:16px;transform:scaleX(0.9300);transform-origin:100% 0;">$<span class="d">0</span>.<span class="d">58</span></div>
<div class="t " style="right:677.44px;top:417px;font-size:14.3px;line-height:16px;transform:scaleX(0.9300);transform-origin:100% 0;"><span class="d">0</span></div>
<div class="t " style="left:1235.69px;top:417px;font-size:14.3px;line-height:16px;transform:scaleX(0.9300);transform-origin:0 0;">Sysco</div>
<div class="t " style="left:1401.21px;top:417px;font-size:14.3px;line-height:16px;transform:scaleX(0.9300);transform-origin:0 0;">Each</div>
<div class="t " style="left:232.69px;top:439px;font-size:14.3px;line-height:16px;transform:scaleX(0.9300);transform-origin:0 0;"><span class="d">95</span> <span class="s">/</span> <span class="d">10</span> <span class="s">/</span> <span class="d">04</span></div>
<div class="t " style="left:349.69px;top:439px;font-size:14.3px;line-height:16px;transform:scaleX(0.9300);transform-origin:0 0;">Supplies</div>
<div class="t " style="left:412.21px;top:439px;font-size:14.3px;line-height:16px;transform:scaleX(0.9300);transform-origin:0 0;">Packagi...</div>
<div class="t " style="left:482.21px;top:439px;font-size:14.3px;line-height:16px;transform:scaleX(0.9300);transform-origin:0 0;">Food Se...</div>
<div class="t " style="left:746.69px;top:439px;font-size:14.3px;line-height:16px;transform:scaleX(0.9300);transform-origin:0 0;"><span class="d">9510467002</span></div>
<div class="t " style="left:838.20px;top:439px;font-size:14.3px;line-height:16px;transform:scaleX(0.9534);transform-origin:0 0;">8 Ounce Deli Containe...</div>
<div class="t " style="right:838.57px;top:439px;font-size:14.3px;line-height:16px;transform:scaleX(0.9300);transform-origin:100% 0;"><span class="d">42</span>.<span class="d">4</span></div>
<div class="t " style="right:775.30px;top:439px;font-size:14.3px;line-height:16px;transform:scaleX(0.9300);transform-origin:100% 0;">$<span class="d">24</span>.<span class="d">99</span></div>
<div class="t " style="right:677.44px;top:439px;font-size:14.3px;line-height:16px;transform:scaleX(0.9300);transform-origin:100% 0;"><span class="d">0</span></div>
<div class="t " style="left:1235.69px;top:439px;font-size:14.3px;line-height:16px;transform:scaleX(0.9300);transform-origin:0 0;">Sysco</div>
<div class="t " style="left:1401.64px;top:439px;font-size:14.3px;line-height:16px;transform:scaleX(0.9300);transform-origin:0 0;">Case</div>
<div class="t " style="left:232.69px;top:461px;font-size:14.3px;line-height:16px;transform:scaleX(0.9300);transform-origin:0 0;"><span class="d">95</span> <span class="s">/</span> <span class="d">10</span> <span class="s">/</span> <span class="d">04</span></div>
<div class="t " style="left:349.69px;top:461px;font-size:14.3px;line-height:16px;transform:scaleX(0.9300);transform-origin:0 0;">Supplies</div>
<div class="t " style="left:412.21px;top:461px;font-size:14.3px;line-height:16px;transform:scaleX(0.9300);transform-origin:0 0;">Packagi...</div>
<div class="t " style="left:482.21px;top:461px;font-size:14.3px;line-height:16px;transform:scaleX(0.9300);transform-origin:0 0;">Food Se...</div>
<div class="t " style="left:746.69px;top:461px;font-size:14.3px;line-height:16px;transform:scaleX(0.9300);transform-origin:0 0;"><span class="d">9510400003</span></div>
<div class="t " style="left:838.20px;top:461px;font-size:14.3px;line-height:16px;transform:scaleX(0.9534);transform-origin:0 0;">8 Ounce Deli Containe...</div>
<div class="t " style="right:775.38px;top:461px;font-size:14.3px;line-height:16px;transform:scaleX(0.9300);transform-origin:100% 0;">$<span class="d">0</span>.<span class="d">25</span></div>
<div class="t " style="right:677.44px;top:461px;font-size:14.3px;line-height:16px;transform:scaleX(0.9300);transform-origin:100% 0;"><span class="d">0</span></div>
<div class="t " style="left:1235.69px;top:461px;font-size:14.3px;line-height:16px;transform:scaleX(0.9300);transform-origin:0 0;">Sysco</div>
<div class="t " style="left:1401.21px;top:461px;font-size:14.3px;line-height:16px;transform:scaleX(0.9300);transform-origin:0 0;">Each</div>
<div class="t " style="left:232.64px;top:483px;font-size:14.3px;line-height:16px;transform:scaleX(0.9300);transform-origin:0 0;"><span class="d">20</span> <span class="s">/</span> <span class="d">20</span> <span class="s">/</span> <span class="d">05</span></div>
<div class="t " style="left:349.64px;top:483px;font-size:14.3px;line-height:16px;transform:scaleX(0.9300);transform-origin:0 0;">Gift &amp; ...</div>
<div class="t " style="left:412.21px;top:483px;font-size:14.3px;line-height:16px;transform:scaleX(0.9300);transform-origin:0 0;">Homew...</div>
<div class="t " style="left:482.21px;top:483px;font-size:14.3px;line-height:16px;transform:scaleX(0.9300);transform-origin:0 0;">Kitchen ...</div>
<div class="t " style="left:746.64px;top:483px;font-size:14.3px;line-height:16px;transform:scaleX(0.9300);transform-origin:0 0;"><span class="d">2020575101</span></div>
<div class="t " style="left:838.19px;top:483px;font-size:14.3px;line-height:16px;transform:scaleX(0.9256);transform-origin:0 0;">9 oz Wine Glass Set</div>
<div class="t " style="right:838.44px;top:483px;font-size:14.3px;line-height:16px;transform:scaleX(0.9300);transform-origin:100% 0;"><span class="d">68</span>.<span class="d">0</span></div>
<div class="t " style="right:775.38px;top:483px;font-size:14.3px;line-height:16px;transform:scaleX(0.9300);transform-origin:100% 0;">$<span class="d">6</span>.<span class="d">95</span></div>
<div class="t " style="right:727.38px;top:483px;font-size:14.3px;line-height:16px;transform:scaleX(0.9300);transform-origin:100% 0;">$<span class="d">13</span>....</div>
<div class="t " style="right:677.44px;top:483px;font-size:14.3px;line-height:16px;transform:scaleX(0.9300);transform-origin:100% 0;"><span class="d">0</span></div>
<div class="t " style="left:1236.25px;top:483px;font-size:14.3px;line-height:16px;transform:scaleX(0.9300);transform-origin:0 0;">Westland G...</div>
<div class="t " style="left:1401.21px;top:483px;font-size:14.3px;line-height:16px;transform:scaleX(0.9300);transform-origin:0 0;">Each</div>
<div class="t " style="left:232.61px;top:505px;font-size:14.3px;line-height:16px;transform:scaleX(0.9300);transform-origin:0 0;"><span class="d">74</span> <span class="s">/</span> <span class="d">60</span></div>
<div class="t " style="left:349.21px;top:505px;font-size:14.3px;line-height:16px;transform:scaleX(0.9300);transform-origin:0 0;">Liquor</div>
<div class="t " style="left:413.25px;top:505px;font-size:14.3px;line-height:16px;transform:scaleX(0.9300);transform-origin:0 0;">Vodka</div>
<div class="t " style="left:746.61px;top:505px;font-size:14.3px;line-height:16px;transform:scaleX(0.9300);transform-origin:0 0;"><span class="d">7460048101</span></div>
<div class="t " style="left:838.77px;top:505px;font-size:14.3px;line-height:16px;transform:scaleX(0.9692);transform-origin:0 0;">Absolut  1.75</div>
<div class="t " style="right:838.45px;top:505px;font-size:14.3px;line-height:16px;transform:scaleX(0.9300);transform-origin:100% 0;">-<span class="d">9855</span>.<span class="d">0</span></div>
<div class="t " style="right:775.30px;top:505px;font-size:14.3px;line-height:16px;transform:scaleX(0.9300);transform-origin:100% 0;">$<span class="d">29</span>.<span class="d">19</span></div>
<div class="t " style="right:727.38px;top:505px;font-size:14.3px;line-height:16px;transform:scaleX(0.9300);transform-origin:100% 0;">$<span class="d">33</span>....</div>
<div class="t " style="right:677.44px;top:505px;font-size:14.3px;line-height:16px;transform:scaleX(0.9300);transform-origin:100% 0;"><span class="d">0</span></div>
<div class="t " style="left:1235.21px;top:505px;font-size:14.3px;line-height:16px;transform:scaleX(0.9300);transform-origin:0 0;">Major Bran...</div>
<div class="t " style="left:1401.29px;top:505px;font-size:14.3px;line-height:16px;transform:scaleX(0.9300);transform-origin:0 0;"><span class="d">1</span>.<span class="d">75</span></div>
<div class="t " style="left:232.61px;top:527px;font-size:14.3px;line-height:16px;transform:scaleX(0.9300);transform-origin:0 0;"><span class="d">74</span> <span class="s">/</span> <span class="d">60</span></div>
<div class="t " style="left:349.21px;top:527px;font-size:14.3px;line-height:16px;transform:scaleX(0.9300);transform-origin:0 0;">Liquor</div>
<div class="t " style="left:413.25px;top:527px;font-size:14.3px;line-height:16px;transform:scaleX(0.9300);transform-origin:0 0;">Vodka</div>
<div class="t " style="left:746.61px;top:527px;font-size:14.3px;line-height:16px;transform:scaleX(0.9300);transform-origin:0 0;"><span class="d">7460048102</span></div>
<div class="t " style="left:838.77px;top:527px;font-size:14.3px;line-height:16px;transform:scaleX(1.0040);transform-origin:0 0;">Absolut  50ml</div>
<div class="t " style="right:838.44px;top:527px;font-size:14.3px;line-height:16px;transform:scaleX(0.9300);transform-origin:100% 0;"><span class="d">236</span>.<span class="d">0</span></div>
<div class="t " style="right:775.44px;top:527px;font-size:14.3px;line-height:16px;transform:scaleX(0.9300);transform-origin:100% 0;">$<span class="d">2</span>.<span class="d">00</span></div>
<div class="t " style="right:727.30px;top:527px;font-size:14.3px;line-height:16px;transform:scaleX(0.9300);transform-origin:100% 0;">$<span class="d">4</span>.<span class="d">99</span></div>
<div class="t " style="right:677.44px;top:527px;font-size:14.3px;line-height:16px;transform:scaleX(0.9300);transform-origin:100% 0;"><span class="d">0</span></div>
<div class="t " style="left:1235.21px;top:527px;font-size:14.3px;line-height:16px;transform:scaleX(0.9300);transform-origin:0 0;">Major Bran...</div>
<div class="t " style="left:1401.21px;top:527px;font-size:14.3px;line-height:16px;transform:scaleX(0.9300);transform-origin:0 0;">Each</div>
<div class="r" style="left:1788px;top:237px;width:16px;height:299px;background:#f0f0f0"></div>
<div class="r" style="left:1788px;top:237px;width:1px;height:299px;background:#fafafa"></div>
<div class="r" style="left:1789px;top:254px;width:15px;height:38px;background:#cdcdcd"></div>
<svg class="r" style="left:1791px;top:242px;" width="11" height="8" viewBox="0 0 11 8"><path d="M1.5 6.5 L5.5 2.5 L9.5 6.5" fill="none" stroke="#555" stroke-width="2"/></svg>
<div class="r" style="left:1813px;top:237px;width:80px;height:44px;background:#f0f0f0;border:1px solid #a0a0a0;box-sizing:border-box"></div>
<div class="t " style="left:1833.15px;top:243px;font-size:13.2px;line-height:15px;transform-origin:0 0;">Create</div>
<div class="t " style="left:1825.02px;top:260px;font-size:13.2px;line-height:15px;transform-origin:0 0;">New Item</div>
<div class="r" style="left:1813px;top:289px;width:80px;height:32px;background:#f0f0f0;border:1px solid #a0a0a0;box-sizing:border-box"></div>
<div class="t " style="left:1826.85px;top:297px;font-size:13.2px;line-height:15px;transform-origin:0 0;">Edit Item</div>
<div class="r" style="left:1813px;top:329px;width:80px;height:44px;background:#f0f0f0;border:1px solid #a0a0a0;box-sizing:border-box"></div>
<div class="t " style="left:1828.17px;top:335px;font-size:13.2px;line-height:15px;transform-origin:0 0;">Remove</div>
<div class="t " style="left:1839.98px;top:352px;font-size:13.2px;line-height:15px;transform-origin:0 0;">Item</div>
<div class="r" style="left:1813px;top:381px;width:80px;height:44px;background:#f0f0f0;border:1px solid #a0a0a0;box-sizing:border-box"></div>
<div class="t " style="left:1838.94px;top:387px;font-size:13.2px;line-height:15px;transform-origin:0 0;">Print</div>
<div class="t " style="left:1833.25px;top:405px;font-size:13.2px;line-height:15px;transform-origin:0 0;">Labels</div>
<div class="r" style="left:1813px;top:433px;width:80px;height:60px;background:#f0f0f0;border:1px solid #a0a0a0;box-sizing:border-box"></div>
<div class="t " style="left:1824.42px;top:439px;font-size:13.2px;line-height:15px;transform-origin:0 0;">Adjust On</div>
<div class="t " style="left:1837.11px;top:457px;font-size:13.2px;line-height:15px;transform-origin:0 0;">Hand</div>
<div class="t " style="left:1828.12px;top:473px;font-size:13.2px;line-height:15px;transform-origin:0 0;">Quantity</div>
<div class="r" style="left:1813px;top:501px;width:80px;height:44px;background:#f0f0f0;border:1px solid #a0a0a0;box-sizing:border-box"></div>
<div class="t " style="left:1822.52px;top:507px;font-size:11.8px;line-height:14px;transform-origin:0 0;">Create new</div>
<div class="t " style="left:1823.64px;top:522px;font-size:11.8px;line-height:14px;transform-origin:0 0;">Item based</div>
<div class="r" style="left:1901px;top:43px;width:3px;height:493px;background:#d5defb"></div>
<svg class="r" style="left:1897px;top:48px;" width="7" height="12" viewBox="0 0 7 12"><circle cx="7" cy="6" r="5.5" fill="#0d3b73"/></svg>
<div class="r" style="left:1900px;top:217px;width:4px;height:1.5px;background:#333"></div>
<svg class="r" style="left:0;top:0" width="1904" height="536" viewBox="0 0 1904 536">
<defs><filter id="sh" x="-20%" y="-20%" width="140%" height="140%"><feDropShadow dx="1.5" dy="2.5" stdDeviation="2" flood-color="#000" flood-opacity="0.45"/></filter></defs>
<rect x="2.5" y="233.5" width="186" height="42" fill="none" stroke="#fa4149" stroke-width="3" filter="url(#sh)"/>
<g filter="url(#sh)">
<path d="M241.85 242.3 L444.9 156.6" stroke="#fa4149" stroke-width="10.5" stroke-linecap="round"/>
<path d="M213.9 253.3 L235.3 228.8 L239.5 237.4 L244.2 247.2 L247 255.9 Z" fill="#fa4149"/>
</g>
</svg>
</body></html>
